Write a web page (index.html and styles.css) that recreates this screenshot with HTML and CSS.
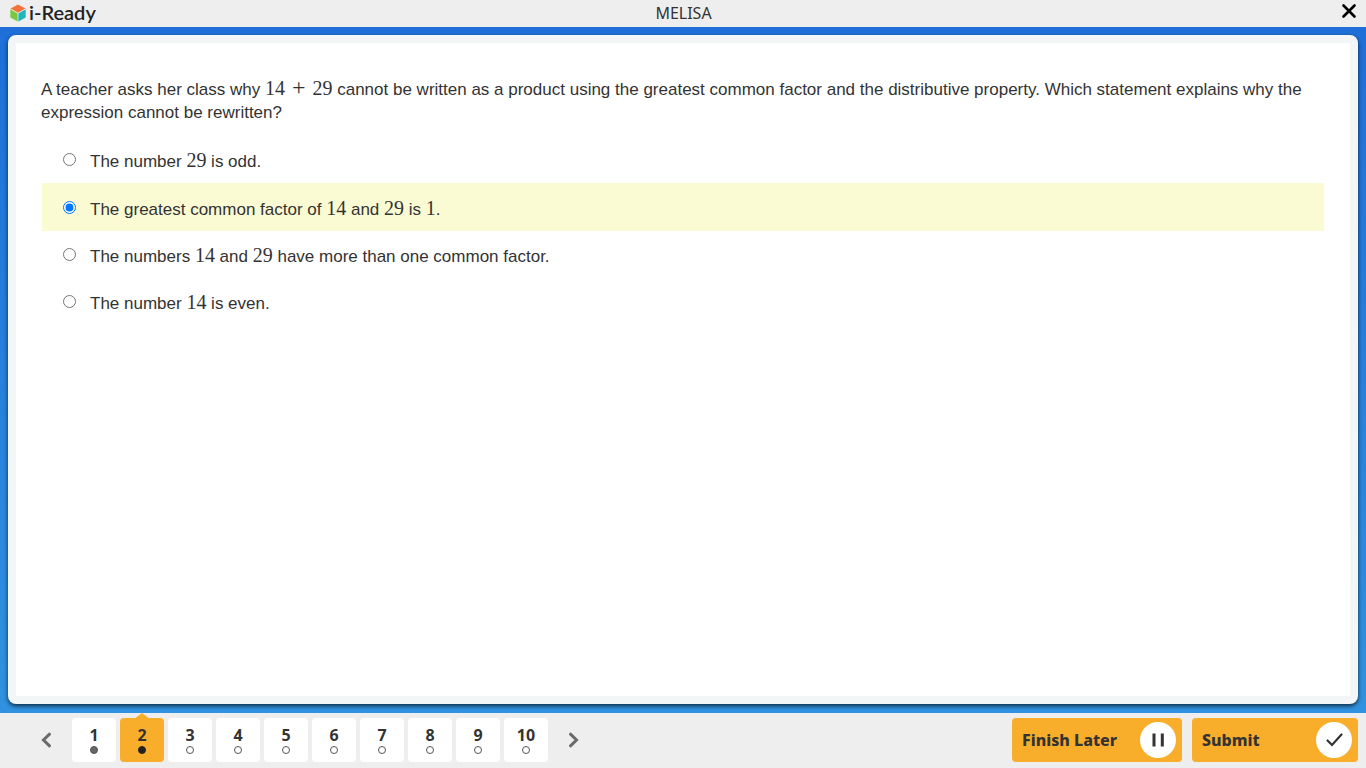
FILE: index.html
```
<!DOCTYPE html>
<html lang="en">
<head>
  <meta charset="UTF-8" />
  <meta name="viewport" content="width=device-width, initial-scale=1.0" />
  <title>i-Ready</title>
  <link rel="stylesheet" href="styles.css">
</head>
<body>
  <header class="topbar">
    <div class="logo">
      <svg width="16" height="18" viewBox="0 0 16 18" aria-hidden="true">
        <path d="M8 0.5L15.4 4.6L8 8.8L0.6 4.6Z" fill="#f4733a" />
        <path d="M0.3 5.3L7.6 9.4V17.6L0.3 13.4Z" fill="#7ac943" />
        <path d="M15.7 5.3L8.4 9.4V17.6L15.7 13.4Z" fill="#1eb5bd" />
      </svg>
      <span>i-Ready</span>
    </div>
    <div class="student">MELISA</div>
    <button class="close" aria-label="Close">
      <svg width="16" height="16" viewBox="0 0 16 16" aria-hidden="true">
        <path d="M2.5 2.5L13.5 13.5M13.5 2.5L2.5 13.5" stroke="#000" stroke-width="2.6" stroke-linecap="round" />
      </svg>
    </button>
  </header>

  <main class="stage">
    <form class="card">
      <p class="question" id="question">A teacher asks her class why <span class="math">14<span class="plus">+</span>29</span> cannot be written as a product using the greatest common factor and the distributive property. Which statement explains why the expression cannot be rewritten?</p>
      <div class="choices" role="radiogroup" aria-labelledby="question">
        <label class="choice">
          <input type="radio" name="answer" value="a" />
          <span>The number <span class="math">29</span> is odd.</span>
        </label>
        <label class="choice selected">
          <input type="radio" name="answer" value="b" checked />
          <span>The greatest common factor of <span class="math">14</span> and <span class="math">29</span> is <span class="math">1</span>.</span>
        </label>
        <label class="choice">
          <input type="radio" name="answer" value="c" />
          <span>The numbers <span class="math">14</span> and <span class="math">29</span> have more than one common factor.</span>
        </label>
        <label class="choice">
          <input type="radio" name="answer" value="d" />
          <span>The number <span class="math">14</span> is even.</span>
        </label>
      </div>
    </form>
  </main>

  <footer class="bottombar">
    <nav class="pager" aria-label="Questions">
      <button class="arrow" aria-label="Previous">
        <svg width="12" height="16" viewBox="0 0 12 16" aria-hidden="true">
          <path d="M9.5 2.2L3.5 8L9.5 13.8" fill="none" stroke="#6b6b6b" stroke-width="3" stroke-linecap="round" />
        </svg>
      </button>
      <div class="pages">
        <button class="page done">1<span class="dot"></span></button>
        <button class="page current" aria-current="step">2<span class="dot"></span></button>
        <button class="page">3<span class="dot"></span></button>
        <button class="page">4<span class="dot"></span></button>
        <button class="page">5<span class="dot"></span></button>
        <button class="page">6<span class="dot"></span></button>
        <button class="page">7<span class="dot"></span></button>
        <button class="page">8<span class="dot"></span></button>
        <button class="page">9<span class="dot"></span></button>
        <button class="page">10<span class="dot"></span></button>
      </div>
      <button class="arrow" aria-label="Next">
        <svg width="12" height="16" viewBox="0 0 12 16" aria-hidden="true">
          <path d="M2.5 2.2L8.5 8L2.5 13.8" fill="none" stroke="#6b6b6b" stroke-width="3" stroke-linecap="round" />
        </svg>
      </button>
    </nav>
    <div class="actions">
      <button class="action later">Finish Later
        <span class="circle">
          <svg width="36" height="36" viewBox="0 0 36 36" aria-hidden="true">
            <path d="M14 11.5V24.5M22.3 11.5V24.5" stroke="#333" stroke-width="3" />
          </svg>
        </span>
      </button>
      <button class="action submit">Submit
        <span class="circle">
          <svg width="36" height="36" viewBox="0 0 36 36" aria-hidden="true">
            <path d="M11.5 18.5L16 23L25.5 12.5" fill="none" stroke="#333" stroke-width="2.2" stroke-linecap="round" />
          </svg>
        </span>
      </button>
    </div>
  </footer>
</body>
</html>
```
FILE: styles.css
```
* {
  box-sizing: border-box;
}
body {
  margin: 0;
  min-height: 100vh;
  display: flex;
  flex-direction: column;
  font-family: "Noto Sans", "Open Sans", sans-serif;
  color: #333;
}
button {
  border: 0;
  padding: 0;
  background: none;
  font: inherit;
  color: inherit;
  cursor: pointer;
}
svg {
  display: block;
}

/* top bar */
.topbar {
  display: grid;
  grid-template-columns: 1fr auto 1fr;
  align-items: center;
  height: 27px;
  padding: 0 9px 2px 10px;
  background: #eee;
}
.logo {
  display: flex;
  align-items: center;
  gap: 3px;
  font-family: Lato, sans-serif;
  font-size: 20px;
  font-weight: 600;
  line-height: 22px;
  color: #222;
}
.logo span {
  padding-bottom: 2px;
}
.student {
  font-size: 16px;
  line-height: 24px;
}
.close {
  justify-self: end;
  padding-bottom: 4px;
}

/* question */
.stage {
  flex: 1;
  display: flex;
  padding: 8px 8px 9px;
  background: linear-gradient(#1e6fd8, #3092e0);
}
.card {
  flex: 1;
  padding: 34px 26px 34px 25px;
  background: #fff;
  border: 8px solid #f3f6f6;
  border-radius: 8px;
  box-shadow: 0 2px 4px rgba(0, 0, 0, 0.7);
  font-family: "Liberation Sans", Arial, sans-serif;
  font-size: 17px;
  line-height: 23px;
}
.question {
  margin: 0;
}
.math {
  font-family: "Liberation Serif", serif;
  font-size: 20px;
  line-height: 20px;
}
.plus {
  margin: 0 7px;
  font-size: 24px;
}
.choices {
  margin: 12px 0 0 1px;
}
.choice {
  display: flex;
  align-items: center;
  gap: 14px;
  height: 47px;
  padding: 3px 21px 0;
}
.choice input {
  width: 13px;
  height: 13px;
  margin: 0 0 4px;
}
.selected {
  height: 48px;
  padding-top: 4px;
  background: #fbfbd3;
}

/* bottom bar */
.bottombar {
  display: flex;
  justify-content: space-between;
  align-items: center;
  height: 55px;
  padding: 0 8px 1px 20px;
  background: #eee;
}
.pager,
.pages,
.actions {
  display: flex;
  align-items: center;
}
.pages {
  gap: 4px;
}
.arrow {
  display: flex;
  justify-content: center;
  width: 52px;
}
.page {
  position: relative;
  display: flex;
  flex-direction: column;
  align-items: center;
  width: 44px;
  height: 44px;
  padding-top: 7px;
  background: #fff;
  border-radius: 4px;
  font-size: 16px;
  font-weight: 700;
  line-height: 21px;
}
.dot {
  width: 8px;
  height: 8px;
  border: 1px solid #555;
  border-radius: 50%;
}
.done .dot {
  background: #666;
}
.current {
  background: #f9ae2b;
}
.current::before {
  content: "";
  position: absolute;
  top: -5px;
  left: 14px;
  border: 8px solid transparent;
  border-top: 0;
  border-bottom: 6px solid #f9ae2b;
}
.current .dot {
  background: #222;
  border-color: #222;
}
.actions {
  gap: 10px;
}
.action {
  display: flex;
  justify-content: space-between;
  align-items: center;
  height: 44px;
  padding: 0 6px 0 10px;
  background: #f9ae2b;
  border-radius: 4px;
  font-size: 16px;
  font-weight: 800;
}
.later {
  width: 170px;
}
.submit {
  width: 166px;
}
.circle {
  background: #fff;
  border-radius: 50%;
}
```
